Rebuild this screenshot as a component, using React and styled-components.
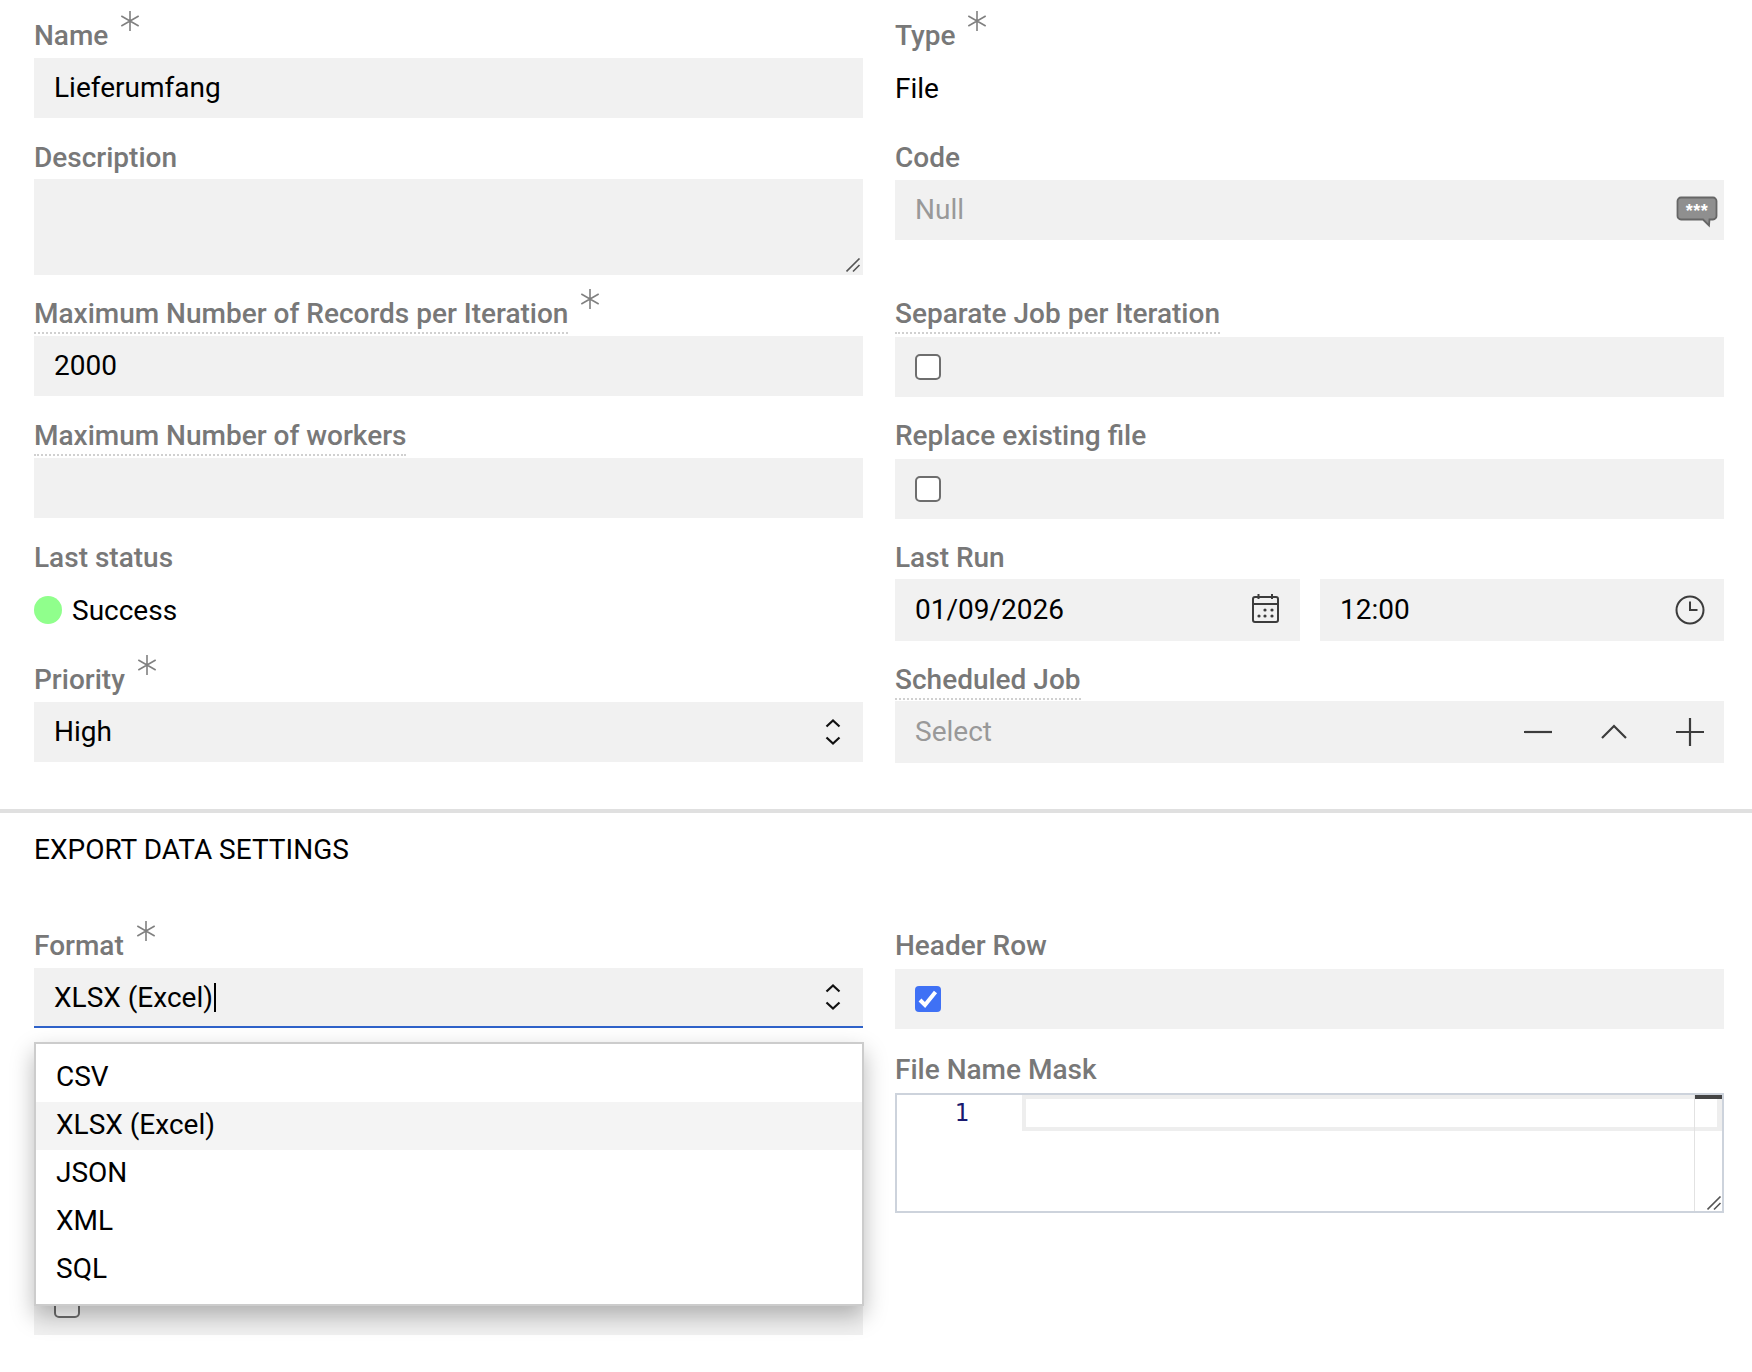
import React from 'react';
import styled, { createGlobalStyle } from 'styled-components';

const Global = createGlobalStyle`
  html, body { margin: 0; padding: 0; background: #fff; }
  body { font-family: Roboto, "Liberation Sans", sans-serif; width: 1752px; height: 1372px; overflow: hidden; }
  * { box-sizing: border-box; }
`;

const Page = styled.div`
  width: 1752px;
  height: 1372px;
  padding-top: 18px;
`;

const Grid = styled.div`
  display: grid;
  grid-template-columns: 829px 829px;
  column-gap: 32px;
  padding-left: 34px;
  grid-template-rows: ${p => p.$rows};
`;

const Field = styled.div`
  position: relative;
  display: flex;
  flex-direction: column;
`;

const LabelRow = styled.div`
  height: ${p => p.$h || 40}px;
  padding-top: ${p => p.$pt || 0}px;
  display: flex;
  align-items: flex-start;
`;

const Label = styled.span`
  display: inline-block;
  font-size: 28px;
  font-weight: 500;
  line-height: 36px;
  height: 38px;
  color: #787878;
  ${p => p.$dotted && 'border-bottom: 2px dotted #d0d0d0;'}
`;

const Star = styled.svg`
  width: 22px;
  height: 22px;
  margin-left: 11px;
  margin-top: -8px;
  flex: none;
`;

const Control = styled.div`
  position: relative;
  height: ${p => p.$h || 60}px;
  margin-top: ${p => p.$nudge || 0}px;
  background: #f1f1f1;
  display: flex;
  align-items: center;
  padding: 0 20px;
  font-size: 28px;
  color: ${p => p.$muted ? '#999' : '#000'};
  ${p => p.$focus && 'border-bottom: 2px solid #2f62c9;'}
`;

const Value = styled.span`
  padding-bottom: 2px;
`;

const Plain = styled.div`
  height: 60px;
  display: flex;
  align-items: center;
  font-size: 28px;
  color: #000;
  margin-top: ${p => p.$top || 0}px;
`;

const Dot = styled.span`
  width: 28px;
  height: 28px;
  border-radius: 50%;
  background: #90ff8c;
  margin-right: 10px;
`;

const Spacer = styled.div`
  flex: 1;
`;

const Check = styled.span`
  width: 26px;
  height: 26px;
  border-radius: 5px;
  border: 2px solid #6e6e6e;
  background: #fff;
`;

const CheckOn = styled.span`
  width: 26px;
  height: 26px;
  border-radius: 4px;
  background: #3f71f5;
  display: flex;
  align-items: center;
  justify-content: center;
`;

const Pair = styled.div`
  display: grid;
  grid-template-columns: 405px 404px;
  column-gap: 20px;
`;

const Actions = styled.div`
  display: flex;
  gap: 48px;
`;

const Divider = styled.div`
  height: 4px;
  margin-top: 46px;
  background: #e0e0e0;
`;

const Heading = styled.h2`
  margin: 19px 0 0 34px;
  height: 96px;
  font-size: 28px;
  line-height: 36px;
  font-weight: 400;
  color: #000;
`;

const Menu = styled.div`
  position: absolute;
  top: 114px;
  left: 0;
  right: -1px;
  height: 264px;
  padding: 10px 0;
  background: #fff;
  border: 2px solid #ccc;
  box-shadow: 0 10px 22px rgba(0, 0, 0, 0.28);
  z-index: 5;
`;

const Option = styled.div`
  height: 48px;
  display: flex;
  align-items: center;
  padding: 0 0 4px 20px;
  font-size: 28px;
  color: #000;
  background: ${p => p.$active ? '#f4f4f4' : 'transparent'};
`;

const Caret = styled.span`
  display: inline-block;
  width: 2px;
  height: 29px;
  background: #000;
  margin-left: 1px;
`;

const Editor = styled.div`
  position: relative;
  height: 120px;
  border: 2px solid #cdd3dc;
  background: #fff;
  display: flex;
`;

const Gutter = styled.div`
  width: 125px;
  flex: none;
  padding: 2px 53px 0 0;
  text-align: right;
  font-family: "DejaVu Sans Mono", monospace;
  font-size: 24px;
  line-height: 32px;
  color: #1a1a70;
`;

const Lines = styled.div`
  flex: 1;
  height: 36px;
  border: 4px solid #eee;
  border-right-width: 5px;
`;

const Ruler = styled.div`
  position: absolute;
  top: 0;
  right: 0;
  bottom: 0;
  width: 28px;
  border-left: 1px solid #e2e2e2;
  &::before {
    content: '';
    position: absolute;
    top: 0;
    left: 0;
    right: 0;
    height: 4px;
    background: #444;
  }
`;

const Grip = styled.svg`
  position: absolute;
  right: ${p => p.$inset}px;
  bottom: ${p => p.$inset}px;
  width: 15px;
  height: 15px;
`;

const Asterisk = () => (
  <Star viewBox="0 0 22 22" fill="none" stroke="#808080" strokeWidth="1.6">
    <path d="M11 1v20M2.300 6l17.400 10M19.700 6L2.300 16" />
  </Star>
);

const Updown = () => (
  <svg width="18" height="30" viewBox="0 0 18 30" fill="none" stroke="#111" strokeWidth="2.2" style={{ marginRight: 1 }}>
    <path d="M2.500 9.500L9 3.500l6.500 6M2.500 20.500L9 26.500l6.500-6" />
  </svg>
);

const Resizer = ({ inset }) => (
  <Grip $inset={inset} viewBox="0 0 15 15" fill="none" stroke="#555" strokeWidth="1.6">
    <path d="M0.500 13.500L13.500 0.500M7 13.500L13.500 7" />
  </Grip>
);

const Tick = () => (
  <svg width="20" height="18" viewBox="0 0 20 18" fill="none" stroke="#fff" strokeWidth="4" strokeLinejoin="miter">
    <path d="M2 10l5 5L17.500 2" />
  </svg>
);

const CodeIcon = () => (
  <svg width="42" height="32" viewBox="0 0 42 32" style={{ marginRight: -14, marginTop: 4 }}>
    <path d="M5 1.500h32a3.500 3.500 0 0 1 3.500 3.500v15a3.500 3.500 0 0 1-3.500 3.500h-3.500l-.5 6-6-6H5A3.500 3.500 0 0 1 1.500 20V5A3.500 3.500 0 0 1 5 1.500z" fill="#8f8f8f" stroke="#666" strokeWidth="1.800" />
    <text x="21" y="21" textAnchor="middle" fontFamily="Liberation Sans, sans-serif" fontSize="18" fontWeight="700" fill="#fff" letterSpacing="0.5">***</text>
  </svg>
);

const CalendarIcon = () => (
  <svg width="28" height="32" viewBox="0 0 28 32" fill="none" stroke="#3c3c3c" strokeWidth="2" style={{ marginRight: 1 }}>
    <rect x="2" y="3" width="25" height="25" rx="2" />
    <path d="M2 10h25M7.500 0v5M21 0v5" />
    <g fill="#3c3c3c" stroke="none">
      <circle cx="14" cy="16" r="1.600" /><circle cx="21" cy="16" r="1.600" />
      <circle cx="8" cy="22" r="1.600" /><circle cx="14" cy="22" r="1.600" /><circle cx="21" cy="22" r="1.600" />
    </g>
  </svg>
);

const ClockIcon = () => (
  <svg width="30" height="30" viewBox="0 0 30 30" fill="none" stroke="#3c3c3c" strokeWidth="2" style={{ marginRight: -1 }}>
    <circle cx="15" cy="15" r="13.500" />
    <path d="M15 6.500V15h7.500" />
  </svg>
);

const Minus = () => (
  <svg width="28" height="28" viewBox="0 0 28 28" fill="none" stroke="#3c3c3c" strokeWidth="2.200"><path d="M0 14h28" /></svg>
);
const ChevronUp = () => (
  <svg width="28" height="28" viewBox="0 0 28 28" fill="none" stroke="#3c3c3c" strokeWidth="2.200"><path d="M2 20L14 8l12 12" /></svg>
);
const Plus = () => (
  <svg width="28" height="28" viewBox="0 0 28 28" fill="none" stroke="#3c3c3c" strokeWidth="2.200"><path d="M0 14h28M14 0v28" /></svg>
);

const Head = ({ text, req, dotted, h, pt }) => (
  <LabelRow $h={h} $pt={pt}>
    <Label $dotted={dotted}>{text}</Label>
    {req && <Asterisk />}
  </LabelRow>
);

export default function App() {
  return (
    <Page>
      <Global />
      <Grid $rows="121px 157px 122px 121px 123px 101px">
        <Field>
          <Head text="Name" req />
          <Control><Value>Lieferumfang</Value></Control>
        </Field>
        <Field>
          <Head text="Type" req />
          <Plain>File</Plain>
        </Field>

        <Field>
          <Head text="Description" pt={1} />
          <Control $h={96}>
            <Resizer inset={2} />
          </Control>
        </Field>
        <Field>
          <Head text="Code" pt={1} />
          <Control $nudge={1} $muted>
            <Value>Null</Value>
            <Spacer />
            <CodeIcon />
          </Control>
        </Field>

        <Field>
          <Head text="Maximum Number of Records per Iteration" req dotted />
          <Control><Value>2000</Value></Control>
        </Field>
        <Field>
          <Head text="Separate Job per Iteration" dotted />
          <Control $nudge={1}><Check /></Control>
        </Field>

        <Field>
          <Head text="Maximum Number of workers" dotted />
          <Control />
        </Field>
        <Field>
          <Head text="Replace existing file" />
          <Control $nudge={1}><Check /></Control>
        </Field>

        <Field>
          <Head text="Last status" pt={1} />
          <Plain $top={1}><Dot />Success</Plain>
        </Field>
        <Field>
          <Head text="Last Run" pt={1} />
          <Pair>
            <Control $h={62}>
              <Value>01/09/2026</Value>
              <Spacer />
              <CalendarIcon />
            </Control>
            <Control $h={62}>
              <Value>12:00</Value>
              <Spacer />
              <ClockIcon />
            </Control>
          </Pair>
        </Field>

        <Field>
          <Head text="Priority" req />
          <Control>
            <Value>High</Value>
            <Spacer />
            <Updown />
          </Control>
        </Field>
        <Field>
          <Head text="Scheduled Job" dotted h={39} />
          <Control $h={62} $muted>
            <Value>Select</Value>
            <Spacer />
            <Actions>
              <Minus />
              <ChevronUp />
              <Plus />
            </Actions>
          </Control>
        </Field>
      </Grid>

      <Divider />
      <Heading>EXPORT DATA SETTINGS</Heading>

      <Grid $rows="124px 183px 100px">
        <Field>
          <Head text="Format" req />
          <Control $focus>
            XLSX (Excel)<Caret />
            <Spacer />
            <Updown />
          </Control>
          <Menu>
            <Option>CSV</Option>
            <Option $active>XLSX (Excel)</Option>
            <Option>JSON</Option>
            <Option>XML</Option>
            <Option>SQL</Option>
          </Menu>
        </Field>
        <Field>
          <Head text="Header Row" />
          <Control $nudge={1}>
            <CheckOn><Tick /></CheckOn>
          </Control>
        </Field>

        <Field />
        <Field>
          <Head text="File Name Mask" h={41} />
          <Editor>
            <Gutter>1</Gutter>
            <Lines />
            <Ruler />
            <Resizer inset={0} />
          </Editor>
        </Field>

        <Field>
          <LabelRow />
          <Control><Check /></Control>
        </Field>
      </Grid>
    </Page>
  );
}
